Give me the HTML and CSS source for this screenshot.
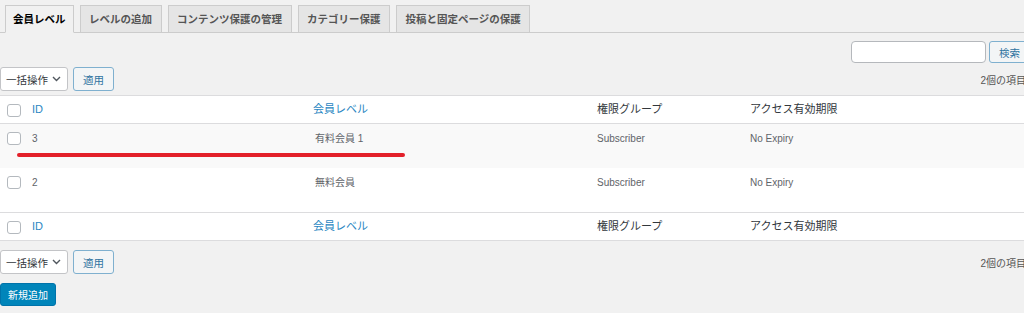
FILE: index.html
```html
<!DOCTYPE html>
<html lang="ja">
  <head>
    <meta charset="UTF-8" />
    <title>会員レベル</title>
    <link rel="stylesheet" href="styles.css">
  </head>
  <body>
    <div class="wrap">
      <nav class="tabs">
        <a class="tab active" href="#">会員レベル</a>
        <a class="tab" href="#">レベルの追加</a>
        <a class="tab" href="#">コンテンツ保護の管理</a>
        <a class="tab" href="#">カテゴリー保護</a>
        <a class="tab" href="#">投稿と固定ページの保護</a>
      </nav>

      <form class="search-row">
        <input type="search" class="search-input" />
        <button type="button" class="btn">検索</button>
      </form>

      <div class="tablenav">
        <div class="bulk">
          <div class="select">
            <span>一括操作</span>
            <svg width="9" height="6" viewBox="0 0 9 6"><polyline points="1,1 4.5,4.5 8,1" fill="none" stroke="#50575e" stroke-width="1.4" /></svg>
          </div>
          <button type="button" class="btn">適用</button>
        </div>
        <span class="count">2個の項目</span>
      </div>

      <div class="table-wrap">
        <table class="list">
          <colgroup>
            <col style="width: 25px" />
            <col style="width: 281px" />
            <col style="width: 284px" />
            <col style="width: 153px" />
            <col />
          </colgroup>
          <thead>
            <tr>
              <td class="cb"><span class="check"></span></td>
              <th><a href="#">ID</a></th>
              <th><a href="#">会員レベル</a></th>
              <th>権限グループ</th>
              <th>アクセス有効期限</th>
            </tr>
          </thead>
          <tbody>
            <tr class="alt">
              <td class="cb"><span class="check"></span></td>
              <td>3</td>
              <td class="name">有料会員 1</td>
              <td>Subscriber</td>
              <td>No Expiry</td>
            </tr>
            <tr>
              <td class="cb"><span class="check"></span></td>
              <td>2</td>
              <td class="name">無料会員</td>
              <td>Subscriber</td>
              <td>No Expiry</td>
            </tr>
          </tbody>
          <tfoot>
            <tr>
              <td class="cb"><span class="check"></span></td>
              <th><a href="#">ID</a></th>
              <th><a href="#">会員レベル</a></th>
              <th>権限グループ</th>
              <th>アクセス有効期限</th>
            </tr>
          </tfoot>
        </table>
        <!-- annotation -->
        <div class="mark"></div>
      </div>

      <div class="tablenav bottom">
        <div class="bulk">
          <div class="select">
            <span>一括操作</span>
            <svg width="9" height="6" viewBox="0 0 9 6"><polyline points="1,1 4.5,4.5 8,1" fill="none" stroke="#50575e" stroke-width="1.4" /></svg>
          </div>
          <button type="button" class="btn">適用</button>
        </div>
        <span class="count">2個の項目</span>
      </div>

      <button type="button" class="btn-primary">新規追加</button>
    </div>
  </body>
</html>
```

FILE: styles.css
```css
* {
  box-sizing: border-box;
  margin: 0;
  padding: 0;
}

body {
  font-family: "Liberation Sans", "Noto Sans CJK JP", sans-serif;
  background-color: #f1f1f1;
  color: #444;
  overflow: hidden;
}

.wrap {
  width: 1030px;
}

/* tabs */
.tabs {
  display: flex;
  gap: 6px;
  padding: 5px 0 0 5px;
  border-bottom: 1px solid #ccc;
}

.tab {
  display: block;
  height: 28px;
  line-height: 26px;
  padding: 0 8.5px;
  margin-bottom: -1px;
  border: 1px solid #ccc;
  background-color: #e5e5e5;
  color: #555;
  font-size: 10.5px;
  font-weight: bold;
  text-decoration: none;
}

.tab.active {
  padding: 0 7px;
  background-color: #f1f1f1;
  border-bottom-color: #f1f1f1;
  color: #000;
}

/* search */
.search-row {
  display: flex;
  justify-content: flex-end;
  gap: 3px;
  margin-top: 8px;
}

.search-input {
  width: 135px;
  height: 22px;
  border: 1px solid #b5b8bc;
  border-radius: 4px;
  background-color: #fff;
}

.btn {
  height: 22px;
  padding: 0 9px;
  font-family: inherit;
  font-size: 10.5px;
  color: #2f73a0;
  background-color: #f3f5f6;
  border: 1px solid #7fb0cf;
  border-radius: 3px;
  cursor: pointer;
}

/* table nav */
.tablenav {
  display: flex;
  justify-content: space-between;
  align-items: center;
  margin-top: 4px;
}

.tablenav.bottom {
  margin-top: 9px;
}

.bulk {
  display: flex;
  align-items: center;
  gap: 5px;
}

.bulk .btn {
  height: 24px;
}

.select {
  display: flex;
  align-items: center;
  justify-content: space-between;
  width: 68px;
  height: 24px;
  padding: 0 6px 0 5px;
  font-size: 10.5px;
  color: #32373c;
  background-color: #fff;
  border: 1px solid #c3c4c7;
  border-radius: 3px;
}

.count {
  padding-right: 4px;
  font-size: 10px;
  color: #555;
}

/* list table */
.table-wrap {
  position: relative;
  margin-top: 4px;
}

.list {
  width: 100%;
  table-layout: fixed;
  border-spacing: 0;
  background-color: #fff;
  border: 1px solid #dcdcde;
  border-left: 0;
  text-align: left;
}

.list th,
.list thead td,
.list tfoot td {
  line-height: 27px;
  padding: 0 7px;
  font-size: 11px;
  font-weight: normal;
  color: #32373c;
  vertical-align: middle;
}

.list thead th,
.list thead td {
  border-bottom: 1px solid #dcdcde;
}

.list tfoot th,
.list tfoot td {
  border-top: 1px solid #dcdcde;
}

.list th a {
  color: #2a86c2;
  text-decoration: none;
}

.list tbody td {
  padding: 8px 7px 22px;
  line-height: 14px;
  font-size: 10px;
  color: #5f6469;
  vertical-align: top;
}

.list tbody td.name {
  padding-left: 9px;
}

.list tbody tr.alt td {
  background-color: #f9f9f9;
}

.list td.cb {
  padding-left: 7px;
  padding-right: 0;
}

.list tbody td.cb {
  padding-top: 7px;
}

.check {
  display: inline-block;
  width: 14px;
  height: 13px;
  border: 1px solid #b4b9be;
  border-radius: 3px;
  background-color: #fff;
  vertical-align: middle;
}

.mark {
  position: absolute;
  left: 17px;
  top: 58px;
  width: 388px;
  height: 4px;
  background-color: #e3202a;
  border-radius: 2px;
}

/* primary */
.btn-primary {
  display: block;
  height: 23px;
  margin-top: 9px;
  padding: 0 7px;
  font-family: inherit;
  font-size: 10px;
  color: #fff;
  background-color: #0085ba;
  border: 1px solid #0073aa;
  border-radius: 3px;
  cursor: pointer;
}
```
